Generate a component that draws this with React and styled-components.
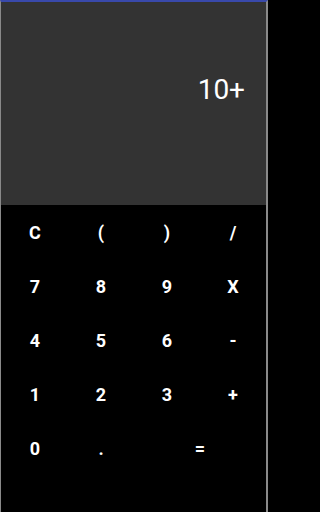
import React from "react";
import styled, { createGlobalStyle } from "styled-components";

const GlobalStyle = createGlobalStyle`
  html, body {
    margin: 0;
    padding: 0;
    background: #000;
  }
  * {
    box-sizing: border-box;
  }
`;

const Screen = styled.div`
  width: 268px;
  height: 512px;
  display: flex;
  flex-direction: column;
  background: #000;
  border-top: 2px solid #3949ab;
  border-left: 1px solid #8a8a8a;
  border-right: 2px solid #8a8a8a;
  font-family: Roboto, "Liberation Sans", sans-serif;
  color: #fff;
`;

const Display = styled.div`
  height: 203px;
  background: #333333;
  display: flex;
  justify-content: flex-end;
  align-items: flex-start;
  padding: 71px 21px 0 0;
  font-size: 28px;
  font-weight: 400;
`;

const Keypad = styled.div`
  display: grid;
  grid-template-columns: repeat(4, 66px);
  grid-auto-rows: 54px;
  padding-left: 1px;
`;

const Key = styled.button`
  grid-column: span ${(p) => p.span || 1};
  background: transparent;
  border: none;
  color: #fff;
  font-family: inherit;
  font-size: 18px;
  font-weight: 700;
  display: flex;
  align-items: center;
  justify-content: center;
  padding: 0;
  cursor: pointer;
`;

const keys = [
  ["C"], ["("], [")"], ["/"],
  ["7"], ["8"], ["9"], ["X"],
  ["4"], ["5"], ["6"], ["-"],
  ["1"], ["2"], ["3"], ["+"],
  ["0"], ["."], ["=", 2],
];

const App = () => {
  return (
    <>
      <GlobalStyle />
      <Screen>
        <Display>10+</Display>
        <Keypad>
          {keys.map(([label, span], i) => (
            <Key key={i} span={span}>
              {label}
            </Key>
          ))}
        </Keypad>
      </Screen>
    </>
  );
};

export default App;
